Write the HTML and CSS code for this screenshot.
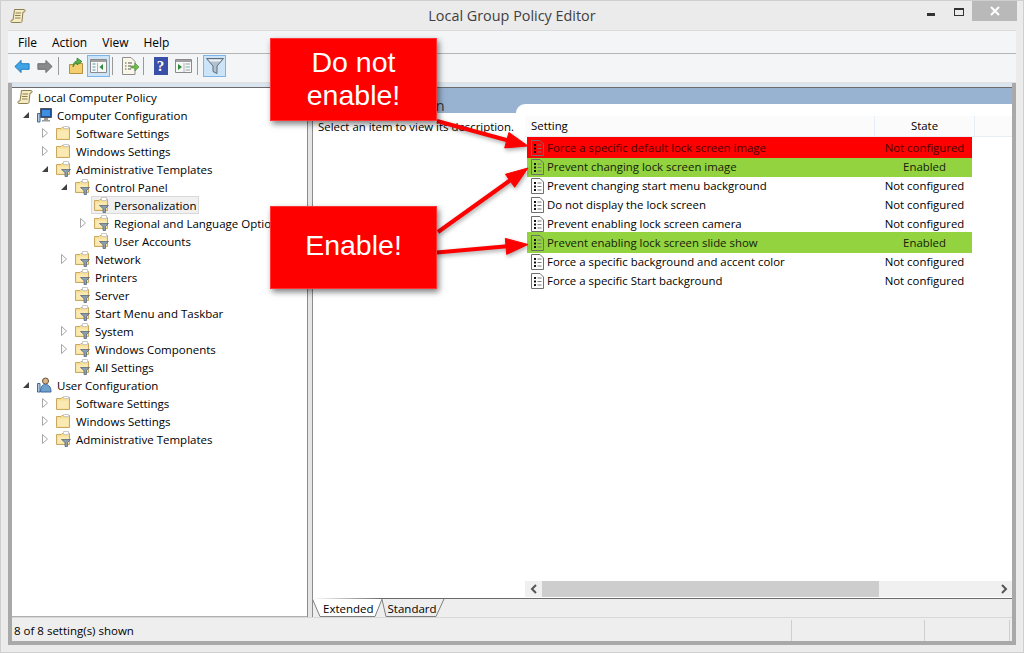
FILE: index.html
```html
<!DOCTYPE html>
<html lang="en">
<head>
  <meta charset="UTF-8">
  <title>Local Group Policy Editor</title>
  <link rel="stylesheet" href="styles.css">
</head>
<body>
  <!-- icons used more than once -->
  <svg class="sprite" aria-hidden="true">
    <symbol id="i-closed" viewBox="0 0 8 10"><path d="M1.5 .5 L6.5 5 L1.5 9.5 Z" fill="#fff" stroke="#a6a6a6"/></symbol>
    <symbol id="i-open" viewBox="0 0 8 10"><path d="M7 2 V8 H1 Z" fill="#404040"/></symbol>
    <symbol id="i-scroll" viewBox="0 0 16 16">
      <path d="M4.5 1.5 H14 C15.5 1.5 15.5 4 14 4 H13 L12 13 C12 14.5 11 14.5 10 14.5 H2 C.5 14.5 .5 12 2 12 H3 Z" fill="#f5ebc2" stroke="#8d8050"/>
      <path d="M5.5 5 H11 M5 7.5 H10.5 M5 10 H10.5" stroke="#8d8050"/>
    </symbol>
    <symbol id="i-folder" viewBox="0 0 16 16">
      <path d="M1.5 3.5 H6 L7 2.5 H14.5 V14.5 H1.5 Z" fill="#f8de92" stroke="#c9a95f"/>
      <path d="M8.5 1.5 H13.5 V3.5 H8.5 Z" fill="#fff" stroke="#c9c9c9"/>
      <path d="M2.5 5.5 H13.5 V13.5 H2.5 Z" fill="#fbe9b4"/>
    </symbol>
    <symbol id="i-policy" viewBox="0 0 16 16">
      <path d="M1.5 3.5 H6 L7 2.5 H14.5 V13.5 H1.5 Z" fill="#f8de92" stroke="#c9a95f"/>
      <path d="M8.5 .5 H13.5 V3.5 H8.5 Z" fill="#fff" stroke="#c9c9c9"/>
      <path d="M2.5 5.5 H13.5 V12.5 H2.5 Z" fill="#fbe9b4"/>
      <path d="M6.5 8.5 H15.5 L12.5 11.5 V15.5 H10 V11.5 Z" fill="#8d9db0" stroke="#5c6a78" stroke-width=".8"/>
    </symbol>
    <symbol id="i-setting" viewBox="0 0 13 16">
      <path class="sheet" d="M.5 .5 H9 L12.5 4 V15.5 H.5 Z" stroke="#6e6e6e"/>
      <path d="M3 4 H5 V6 H3 Z M3 7.5 H5 V9.5 H3 Z M3 11 H5 V13 H3 Z" fill="#111"/>
      <path d="M6.5 5 H10.5 M6.5 8.5 H10.5 M6.5 12 H10.5" stroke="#777"/>
    </symbol>
  </svg>

  <div class="window">
    <header class="titlebar">
      <svg class="title-icon" width="16" height="16"><use href="#i-scroll"/></svg>
      <h1>Local Group Policy Editor</h1>
      <div class="controls">
        <span class="btn-min"></span>
        <span class="btn-max"></span>
        <span class="btn-close">
          <svg width="10" height="10" viewBox="0 0 10 10"><path d="M1 1 L9 9 M9 1 L1 9" stroke="#fff" stroke-width="2"/></svg>
        </span>
      </div>
    </header>

    <nav class="menubar">
      <span>File</span><span>Action</span><span>View</span><span>Help</span>
    </nav>

    <div class="toolbar">
      <span class="tool">
        <svg width="16" height="15" viewBox="0 0 18 16" preserveAspectRatio="none"><path d="M1 8 L8 1.5 V5 H17 V11 H8 V14.5 Z" fill="#3ea6e6" stroke="#1b74b8"/></svg>
      </span>
      <span class="tool">
        <svg width="16" height="15" viewBox="0 0 18 16" preserveAspectRatio="none"><path d="M17 8 L10 1.5 V5 H1 V11 H10 V14.5 Z" fill="#8a8a8a" stroke="#666"/></svg>
      </span>
      <i class="sep"></i>
      <span class="tool">
        <svg width="16" height="18" viewBox="0 0 16 18">
          <path d="M1.5 7.5 H6 L7 6.5 H14.5 V16.5 H1.5 Z" fill="#f3cf71" stroke="#b4923f"/>
          <path d="M5 10 C5 6 7 4 9 4 V1 L14 4.5 L9 8 V6 C7.5 6 6 8 5 10 Z" fill="#58b04a" stroke="#2f7d2a" stroke-width=".7"/>
        </svg>
      </span>
      <span class="tool active">
        <svg width="17" height="14" viewBox="0 0 17 14">
          <path d="M.5 .5 H16.5 V13.5 H.5 Z" fill="#f7f7f7" stroke="#8a8a8a"/>
          <path d="M1 1 H16 V3 H1 Z" fill="#a0a0a0"/>
          <path d="M2.5 5 H5.5 M2.5 8 H5.5 M2.5 11 H5.5" stroke="#5a9aa8"/>
          <path d="M7.5 4 V13" stroke="#b5b5b5"/>
          <path d="M13 5 V11 L9.5 8 Z" fill="#2f8a3c"/>
        </svg>
      </span>
      <i class="sep"></i>
      <span class="tool">
        <svg width="18" height="18" viewBox="0 0 18 18">
          <path d="M1.5 .5 H10 L14 4.5 V17.5 H1.5 Z" fill="#faf6e8" stroke="#8d8d8d"/>
          <path d="M4 6 H5.5 M7 6 H11 M4 9 H5.5 M7 9 H10 M4 12 H5.5 M7 12 H10" stroke="#555"/>
          <path d="M10 9 H14 V6 L18 10 L14 14 V11 H10 Z" fill="#6fbf4a" stroke="#3f8a2c" stroke-width=".6"/>
        </svg>
      </span>
      <i class="sep"></i>
      <span class="tool">
        <span class="help-book">?</span>
      </span>
      <span class="tool">
        <svg width="17" height="14" viewBox="0 0 17 14">
          <path d="M.5 .5 H16.5 V13.5 H.5 Z" fill="#f7f7f7" stroke="#8a8a8a"/>
          <path d="M1 1 H16 V3 H1 Z" fill="#a0a0a0"/>
          <path d="M3 5 L7 8 L3 11 Z" fill="#2f8a3c"/>
          <path d="M9 4 V13" stroke="#b5b5b5"/>
          <path d="M10.5 5 H15 M10.5 8 H15 M10.5 11 H15" stroke="#8aa"/>
        </svg>
      </span>
      <i class="sep"></i>
      <span class="tool active">
        <svg width="18" height="18" viewBox="0 0 18 18">
          <path d="M.5 1.5 H17.5 L11 9 V16.5 L7 14.5 V9 Z" fill="#b4c1ce" stroke="#5f6e7c"/>
          <path d="M2.5 2.5 H15.5 L14 4.5 H4 Z" fill="#eef2f6"/>
        </svg>
      </span>
    </div>

    <div class="client">
      <div class="inner">
        <div class="panes-top"></div>
        <div class="panes">
          <aside class="tree">
            <div class="node lvl0"><svg class="ico" width="16" height="16"><use href="#i-scroll"/></svg><span>Local Computer Policy</span></div>
            <div class="node lvl1">
              <svg class="tog" width="8" height="10"><use href="#i-open"/></svg>
              <svg class="ico" width="16" height="16" viewBox="0 0 16 16">
                <path d="M4.5 1.5 H15.5 V10.5 H4.5 Z" fill="#1d4f9c" stroke="#555"/>
                <path d="M6 3 H14 V9 H6 Z" fill="#3f8fe0"/>
                <path d="M8 11 H12 V13 H14 V14.5 H6 V13 H8 Z" fill="#9a9a9a"/>
                <path d="M1.5 6.5 H4 V15 H1.5 Z" fill="#b4cde6" stroke="#3e6a9e"/>
              </svg>
              <span>Computer Configuration</span>
            </div>
            <div class="node lvl2"><svg class="tog" width="8" height="10"><use href="#i-closed"/></svg><svg class="ico" width="16" height="16"><use href="#i-folder"/></svg><span>Software Settings</span></div>
            <div class="node lvl2"><svg class="tog" width="8" height="10"><use href="#i-closed"/></svg><svg class="ico" width="16" height="16"><use href="#i-folder"/></svg><span>Windows Settings</span></div>
            <div class="node lvl2"><svg class="tog" width="8" height="10"><use href="#i-open"/></svg><svg class="ico" width="16" height="16"><use href="#i-policy"/></svg><span>Administrative Templates</span></div>
            <div class="node lvl3"><svg class="tog" width="8" height="10"><use href="#i-open"/></svg><svg class="ico" width="16" height="16"><use href="#i-policy"/></svg><span>Control Panel</span></div>
            <div class="node lvl4"><span class="tog"></span><div class="selected"><svg class="ico" width="16" height="16"><use href="#i-policy"/></svg><span>Personalization</span></div></div>
            <div class="node lvl4"><svg class="tog" width="8" height="10"><use href="#i-closed"/></svg><svg class="ico" width="16" height="16"><use href="#i-policy"/></svg><span>Regional and Language Options</span></div>
            <div class="node lvl4"><span class="tog"></span><svg class="ico" width="16" height="16"><use href="#i-policy"/></svg><span>User Accounts</span></div>
            <div class="node lvl3"><svg class="tog" width="8" height="10"><use href="#i-closed"/></svg><svg class="ico" width="16" height="16"><use href="#i-policy"/></svg><span>Network</span></div>
            <div class="node lvl3"><span class="tog"></span><svg class="ico" width="16" height="16"><use href="#i-policy"/></svg><span>Printers</span></div>
            <div class="node lvl3"><span class="tog"></span><svg class="ico" width="16" height="16"><use href="#i-policy"/></svg><span>Server</span></div>
            <div class="node lvl3"><span class="tog"></span><svg class="ico" width="16" height="16"><use href="#i-policy"/></svg><span>Start Menu and Taskbar</span></div>
            <div class="node lvl3"><svg class="tog" width="8" height="10"><use href="#i-closed"/></svg><svg class="ico" width="16" height="16"><use href="#i-policy"/></svg><span>System</span></div>
            <div class="node lvl3"><svg class="tog" width="8" height="10"><use href="#i-closed"/></svg><svg class="ico" width="16" height="16"><use href="#i-policy"/></svg><span>Windows Components</span></div>
            <div class="node lvl3"><span class="tog"></span><svg class="ico" width="16" height="16"><use href="#i-policy"/></svg><span>All Settings</span></div>
            <div class="node lvl1">
              <svg class="tog" width="8" height="10"><use href="#i-open"/></svg>
              <svg class="ico" width="16" height="16" viewBox="0 0 16 16">
                <circle cx="9.5" cy="4" r="3" fill="#d9b48a" stroke="#6b5236"/>
                <path d="M4.5 15 C4.5 9 7 7.5 9.5 7.5 C12 7.5 15 9 15 15 Z" fill="#6f9fcb" stroke="#3e6a9e"/>
                <path d="M1.5 6.5 H4 V15 H1.5 Z" fill="#b4cde6" stroke="#3e6a9e"/>
              </svg>
              <span>User Configuration</span>
            </div>
            <div class="node lvl2"><svg class="tog" width="8" height="10"><use href="#i-closed"/></svg><svg class="ico" width="16" height="16"><use href="#i-folder"/></svg><span>Software Settings</span></div>
            <div class="node lvl2"><svg class="tog" width="8" height="10"><use href="#i-closed"/></svg><svg class="ico" width="16" height="16"><use href="#i-folder"/></svg><span>Windows Settings</span></div>
            <div class="node lvl2"><svg class="tog" width="8" height="10"><use href="#i-closed"/></svg><svg class="ico" width="16" height="16"><use href="#i-policy"/></svg><span>Administrative Templates</span></div>
          </aside>

          <div class="splitter"></div>

          <section class="detail">
            <div class="detail-main">
              <div class="desc">
                <div class="desc-title">Personalization</div>
                <p class="desc-text">Select an item to view its description.</p>
              </div>
              <div class="list-wrap">
                <div class="list">
                  <div class="list-head">
                    <div class="col-setting">Setting</div>
                    <div class="col-state">State</div>
                    <div class="col-rest"></div>
                  </div>
                  <div class="rows">
                    <div class="row red"><svg width="13" height="16"><use href="#i-setting"/></svg><span class="name">Force a specific default lock screen image</span><span class="state">Not configured</span></div>
                    <div class="row green"><svg width="13" height="16"><use href="#i-setting"/></svg><span class="name">Prevent changing lock screen image</span><span class="state">Enabled</span></div>
                    <div class="row"><svg width="13" height="16"><use href="#i-setting"/></svg><span class="name">Prevent changing start menu background</span><span class="state">Not configured</span></div>
                    <div class="row"><svg width="13" height="16"><use href="#i-setting"/></svg><span class="name">Do not display the lock screen</span><span class="state">Not configured</span></div>
                    <div class="row"><svg width="13" height="16"><use href="#i-setting"/></svg><span class="name">Prevent enabling lock screen camera</span><span class="state">Not configured</span></div>
                    <div class="row green"><svg width="13" height="16"><use href="#i-setting"/></svg><span class="name">Prevent enabling lock screen slide show</span><span class="state">Enabled</span></div>
                    <div class="row"><svg width="13" height="16"><use href="#i-setting"/></svg><span class="name">Force a specific background and accent color</span><span class="state">Not configured</span></div>
                    <div class="row"><svg width="13" height="16"><use href="#i-setting"/></svg><span class="name">Force a specific Start background</span><span class="state">Not configured</span></div>
                  </div>
                  <div class="hscroll">
                    <span class="arrow-btn"><svg width="8" height="10" viewBox="0 0 8 10"><path d="M6 1 L2 5 L6 9" fill="none" stroke="#555" stroke-width="2"/></svg></span>
                    <span class="thumb"></span>
                    <span class="track"></span>
                    <span class="arrow-btn"><svg width="8" height="10" viewBox="0 0 8 10"><path d="M2 1 L6 5 L2 9" fill="none" stroke="#555" stroke-width="2"/></svg></span>
                  </div>
                </div>
              </div>
            </div>
            <div class="tabs">
              <svg class="tab-shapes" width="140" height="20" viewBox="0 0 140 20">
                <path d="M70 1.5 L74 18.5 H124 L132 1" fill="#eee" stroke="#808080"/>
                <path d="M0 0 L8 18.5 H63 L70 1" fill="#fff" stroke="#808080"/>
              </svg>
              <span class="tab">Extended</span>
              <span class="tab">Standard</span>
            </div>
          </section>
        </div>
        <footer class="status">
          <div class="cell first">8 of 8 setting(s) shown</div>
          <div class="cell second"></div>
          <div class="cell third"></div>
        </footer>
      </div>
    </div>
  </div>

  <!-- annotations on top of the screenshot -->
  <svg class="arrows" width="1024" height="653">
    <g fill="#f00" stroke="#f00">
      <path d="M437 121 L510 141" stroke-width="4"/>
      <path d="M528 146 L504.7 147.9 L508.9 132.5 Z"/>
      <path d="M438 232 L512 179" stroke-width="4"/>
      <path d="M528 168 L514.7 187.3 L505.4 174.3 Z"/>
      <path d="M437 252.5 L510 246" stroke-width="4"/>
      <path d="M528 244.5 L506.7 254.4 L505.3 238.4 Z"/>
    </g>
  </svg>
  <div class="callout callout-top">Do not<br>enable!</div>
  <div class="callout callout-bottom">Enable!</div>
</body>
</html>
```

FILE: styles.css
```css
* {
  box-sizing: border-box;
  margin: 0;
  padding: 0;
}

body {
  position: relative;
  width: 1024px;
  height: 653px;
  overflow: hidden;
  font-family: "Open Sans", "Noto Sans", sans-serif;
  font-size: 11.5px;
  color: #000;
  background: #ebebeb;
}

svg {
  display: block;
  flex: none;
}

.sprite {
  position: absolute;
  width: 0;
  height: 0;
}

.window {
  display: flex;
  flex-direction: column;
  height: 653px;
  border: 1px solid #cfcfcf;
  padding: 0 7px 7px;
}

/* title bar */
.titlebar {
  position: relative;
  display: flex;
  align-items: center;
  justify-content: center;
  height: 30px;
  flex: none;
  padding-bottom: 2px;
}

.titlebar h1 {
  font-size: 14.4px;
  font-weight: 400;
  color: #3f3f3f;
}

.title-icon {
  position: absolute;
  left: 2px;
  top: 7px;
}

.controls {
  position: absolute;
  top: 0;
  right: -1px;
  display: flex;
  align-items: flex-start;
}

.btn-min {
  width: 8px;
  height: 3px;
  margin: 12px 19px 0 0;
  background: #333;
}

.btn-max {
  width: 10px;
  height: 8px;
  margin: 7px 8px 0 0;
  border: 1px solid #333;
  border-top-width: 2px;
}

.btn-close {
  display: flex;
  align-items: center;
  justify-content: center;
  width: 45px;
  height: 20px;
  background: #b9b9b9;
}

/* menu and toolbar */
.menubar {
  display: flex;
  align-items: center;
  flex: none;
  height: 23px;
  padding-left: 10px;
  gap: 15px;
  background: #f4f5f7;
  border-bottom: 1px solid #b5b5b5;
  box-shadow: 0 -1px 0 #dcdcdc;
  font-size: 12px;
}

.toolbar {
  display: flex;
  align-items: flex-start;
  flex: none;
  height: 29px;
  padding: 1px 0 0 2px;
  background: #f4f5f7;
  border-bottom: 1px solid #e0e0e0;
}

.tool {
  display: flex;
  align-items: center;
  justify-content: center;
  width: 23px;
  height: 22px;
}

.tool.active {
  background: #cce4f7;
  border: 1px solid #7db4e8;
}

.sep {
  width: 1px;
  height: 18px;
  margin: 2px 5px 0 2px;
  background: #9a9a9a;
}

.help-book {
  width: 14px;
  height: 18px;
  background: #3a50a8;
  color: #fff;
  font: 700 15px/18px "Liberation Serif", serif;
  text-align: center;
}

/* main area */
.client {
  flex: 1;
  min-height: 0;
  padding: 0 4px 4px;
  background: #a9a9a9;
}

.inner {
  display: flex;
  flex-direction: column;
  height: 100%;
  background: #eee;
}

.panes-top {
  height: 5px;
  flex: none;
  background: #dae5ef;
  border-bottom: 1px solid #6b6b6b;
}

.panes {
  display: flex;
  flex: 1;
  min-height: 0;
}

.tree {
  width: 295px;
  flex: none;
  background: #fff;
  border-bottom: 1px solid #b0b0b0;
}

.node {
  display: flex;
  align-items: center;
  height: 18px;
  white-space: nowrap;
}

.ico {
  margin-right: 5px;
}

.tog {
  display: block;
  flex: none;
  width: 8px;
  height: 10px;
  margin-right: 6px;
}

.lvl0 { padding-left: 5px; }
.lvl1 { padding-left: 10px; }
.lvl2 { padding-left: 29px; }
.lvl3 { padding-left: 48px; }
.lvl4 { padding-left: 67px; }

.selected {
  display: flex;
  align-items: center;
  height: 18px;
  margin-left: -2px;
  padding: 0 3px 0 2px;
  background: #f0f0f0;
  box-shadow: inset 0 0 0 1px #d9d9d9;
}

.splitter {
  width: 6px;
  flex: none;
  background: #e6e6e6;
  border-left: 1px solid #8c8c8c;
  border-right: 1px solid #8c8c8c;
}

.detail {
  display: flex;
  flex-direction: column;
  flex: 1;
  min-width: 0;
}

.detail-main {
  display: flex;
  flex: 1;
  min-height: 0;
  background: #fff;
  border-bottom: 1px solid #6b6b6b;
  font-size: 11.4px;
}

.desc {
  width: 203px;
  flex: none;
}

.desc-title {
  height: 25px;
  padding: 7px 0 0 24px;
  font-size: 15px;
  line-height: 20px;
  color: #333;
  background: #98b3d1;
}

.desc-text {
  margin-top: 6px;
  padding-left: 5px;
  white-space: nowrap;
}

.list-wrap {
  display: flex;
  flex: 1;
  min-width: 0;
  padding-top: 16px;
  background: linear-gradient(#98b3d1 30px, #fff 30px);
}

.list {
  display: flex;
  flex-direction: column;
  flex: 1;
  min-width: 0;
  padding: 12px 0 1px 9px;
  background: #fff;
  border-top-left-radius: 9px;
}

.list-head {
  display: flex;
  flex: none;
  height: 21px;
  line-height: 20px;
  background: #fbfbfb;
  border-bottom: 1px solid #e6eef7;
}

.col-setting {
  width: 350px;
  padding-left: 6px;
  border-right: 1px solid #e6eef7;
}

.col-state {
  width: 100px;
  text-align: center;
  border-right: 1px solid #e6eef7;
}

.col-rest {
  flex: 1;
}

.rows {
  display: flex;
  flex-direction: column;
  flex: 1;
  padding-top: 1px;
}

.row {
  --sheet-fill: #fff;
  display: flex;
  flex: none;
  align-items: center;
  width: 445px;
  height: 19px;
  margin-left: 2px;
  padding-left: 4px;
  white-space: nowrap;
}

.sheet {
  fill: var(--sheet-fill);
}

.row .name {
  width: 327px;
  margin-left: 3px;
}

.row .state {
  flex: 1;
  text-align: center;
  padding-left: 3px;
}

.row.red,
.row.green {
  --sheet-fill: transparent;
  position: relative;
  height: 21px;
  margin-top: -1px;
  margin-bottom: -1px;
}

.row.red {
  z-index: 1;
  background: #f00;
  color: #4a0000;
}

.row.green {
  background: #92d33f;
  color: #14220a;
}

.hscroll {
  display: flex;
  flex: none;
  height: 16px;
  background: #f0f0f0;
}

.arrow-btn {
  display: flex;
  align-items: center;
  justify-content: center;
  width: 17px;
}

.thumb {
  width: 337px;
  background: #cdcdcd;
}

.track {
  flex: 1;
}

/* tabs under the list */
.tabs {
  position: relative;
  display: flex;
  flex: none;
  height: 18px;
  padding: 1px 0 0 10px;
  gap: 14px;
  line-height: 18px;
}

.tab {
  position: relative;
}

.tab-shapes {
  position: absolute;
  left: -1px;
  top: -1px;
}

/* status bar */
.status {
  display: flex;
  flex: none;
  height: 24px;
  border-top: 1px solid #d8d8d8;
  padding-top: 2px;
  line-height: 22px;
}

.cell {
  border-right: 1px solid #cfcfcf;
}

.first {
  width: 780px;
  padding-left: 2px;
}

.second {
  width: 133px;
}

.third {
  width: 85px;
}

/* red annotations */
.arrows {
  position: absolute;
  left: 0;
  top: 0;
  filter: drop-shadow(1px 2px 2px rgba(0, 0, 0, .35));
}

.callout {
  position: absolute;
  left: 270px;
  display: flex;
  align-items: center;
  justify-content: center;
  width: 167px;
  height: 83px;
  font-family: "Liberation Sans", Arial, sans-serif;
  font-size: 28.5px;
  line-height: 33px;
  text-align: center;
  color: #fff;
  background: #f00;
  border: 1px solid #f33;
  box-shadow: 2px 3px 6px rgba(0, 0, 0, .5);
}

.callout-top {
  top: 38px;
  padding-bottom: 1px;
}

.callout-bottom {
  top: 206px;
  padding-bottom: 4px;
}
```
